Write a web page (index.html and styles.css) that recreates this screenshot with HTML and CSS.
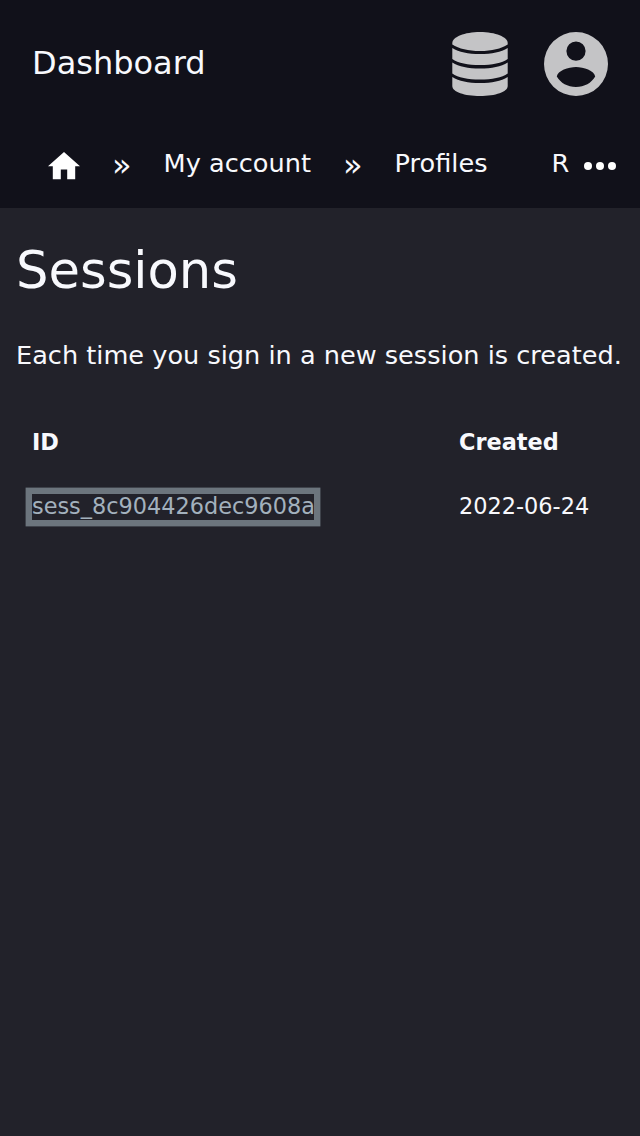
FILE: index.html
```
<!DOCTYPE html>
<html lang="en">
<head>
<meta charset="utf-8">
<title>Sessions</title>
<link rel="stylesheet" href="styles.css">
</head>
<body>
<header class="top">
  <div class="bar">
    <a class="brand">Dashboard</a>
    <svg class="database" viewBox="0 0 56 64" width="56" height="64">
      <path d="M.3 11C.3 5 12.500 0 28 0S55.700 5 55.700 11V12.500C49 16.800 40 19 28 19S7 16.800.3 12.500Z"/>
      <path d="M.3 16C7 20 16 22 28 22S49 20 55.700 16V27C50 31 40 33 28 33S6 31 .3 27Z"/>
      <path d="M.3 30.500C7 34.500 16 36.500 28 36.500S49 34.500 55.700 30.500V41.500C50 45.500 40 47.600 28 47.600S6 45.500.3 41.500Z"/>
      <path d="M.3 45C7 49 16 51 28 51S49 49 55.700 45V54C55.700 60 43.500 64 28 64S.3 60 .3 54Z"/>
    </svg>
    <svg class="account" viewBox="0 0 64 64" width="64" height="64">
      <path fill-rule="evenodd" d="M32 0A32 32 0 1 1 32 64A32 32 0 0 1 32 0ZM32 9.500A9.600 9.600 0 1 0 32 28.700A9.600 9.600 0 0 0 32 9.500ZM12.800 44.500C16.500 50.900 23.600 55 32 55S47.500 50.900 51.200 44.500C50.500 38.500 39.500 34.900 32 34.900S13.500 38.500 12.800 44.500Z"/>
    </svg>
  </div>
  <nav class="crumbs">
    <svg class="home" viewBox="0 0 32 28" width="32" height="28"><path d="M16 0L32 14.200H27.200V27.200H19.200V17.600H12.800V27.200H4.800V14.200H0Z"/></svg>
    <span class="sep">»</span>
    <a class="account-link">My account</a>
    <span class="sep">»</span>
    <a class="profiles-link">Profiles</a>
    <a class="clipped">R</a>
    <svg class="more" viewBox="0 0 32 8" width="32" height="8"><circle cx="4" cy="4" r="4"/><circle cx="16" cy="4" r="4"/><circle cx="28" cy="4" r="4"/></svg>
  </nav>
</header>
<main class="content">
  <h1 class="title">Sessions</h1>
  <p class="intro">Each time you sign in a new session is created.</p>
  <table class="sessions">
    <thead><tr><th class="id">ID</th><th>Created</th></tr></thead>
    <tbody><tr><td class="id"><a class="session">sess_8c904426dec9608a</a></td><td>2022-06-24</td></tr></tbody>
  </table>
</main>
</body>
</html>
```
FILE: styles.css
```
* { box-sizing: border-box; }
body {
  margin: 0;
  min-height: 1136px;
  background: #22222a;
  color: #f8f9fd;
  font: 25.6px/38px "DejaVu Sans", sans-serif;
  overflow: hidden;
}
svg { display: block; flex: none; fill: #fff; }
.top { height: 208px; background: #11111a; }
.bar { height: 128px; display: flex; align-items: center; padding: 0 32px; }
.brand { font-size: 32px; line-height: 48px; margin: 0 auto 2px 0; }
.database { fill: #c4c4c6; margin-right: 36px; }
.account { fill: #c4c4c6; }
.crumbs {
  height: 80px;
  display: flex;
  align-items: flex-start;
  padding: 16px 24px 0 48px;
  white-space: nowrap;
}
.home { margin-top: 8px; }
.sep { width: 16px; margin: 1px 35.600px 0 32px; font-size: 32px; line-height: 40px; }
.account-link { width: 147.400px; }
.profiles-link { width: 92px; }
.clipped { width: 17px; margin-left: 65px; overflow: hidden; }
.more { margin: 18px 0 0 auto; }
.content { padding: 24px 16px; }
.title { margin: 0; font-size: 51.2px; line-height: 76px; font-weight: 400; }
.intro { margin: 28px 0 36px; white-space: nowrap; }
.sessions { width: 608px; border-collapse: collapse; font-size: 22.4px; line-height: 32px; table-layout: fixed; }
.sessions th, .sessions td { height: 64px; padding: 0 0 0 16px; text-align: left; vertical-align: middle; }
.sessions .id { width: 427px; }
.session {
  display: inline-block;
  width: 282px;
  height: 26px;
  line-height: 24px;
  color: #a3b1bd;
  box-shadow: 0 0 0 6.400px #6c757d;
}
```
